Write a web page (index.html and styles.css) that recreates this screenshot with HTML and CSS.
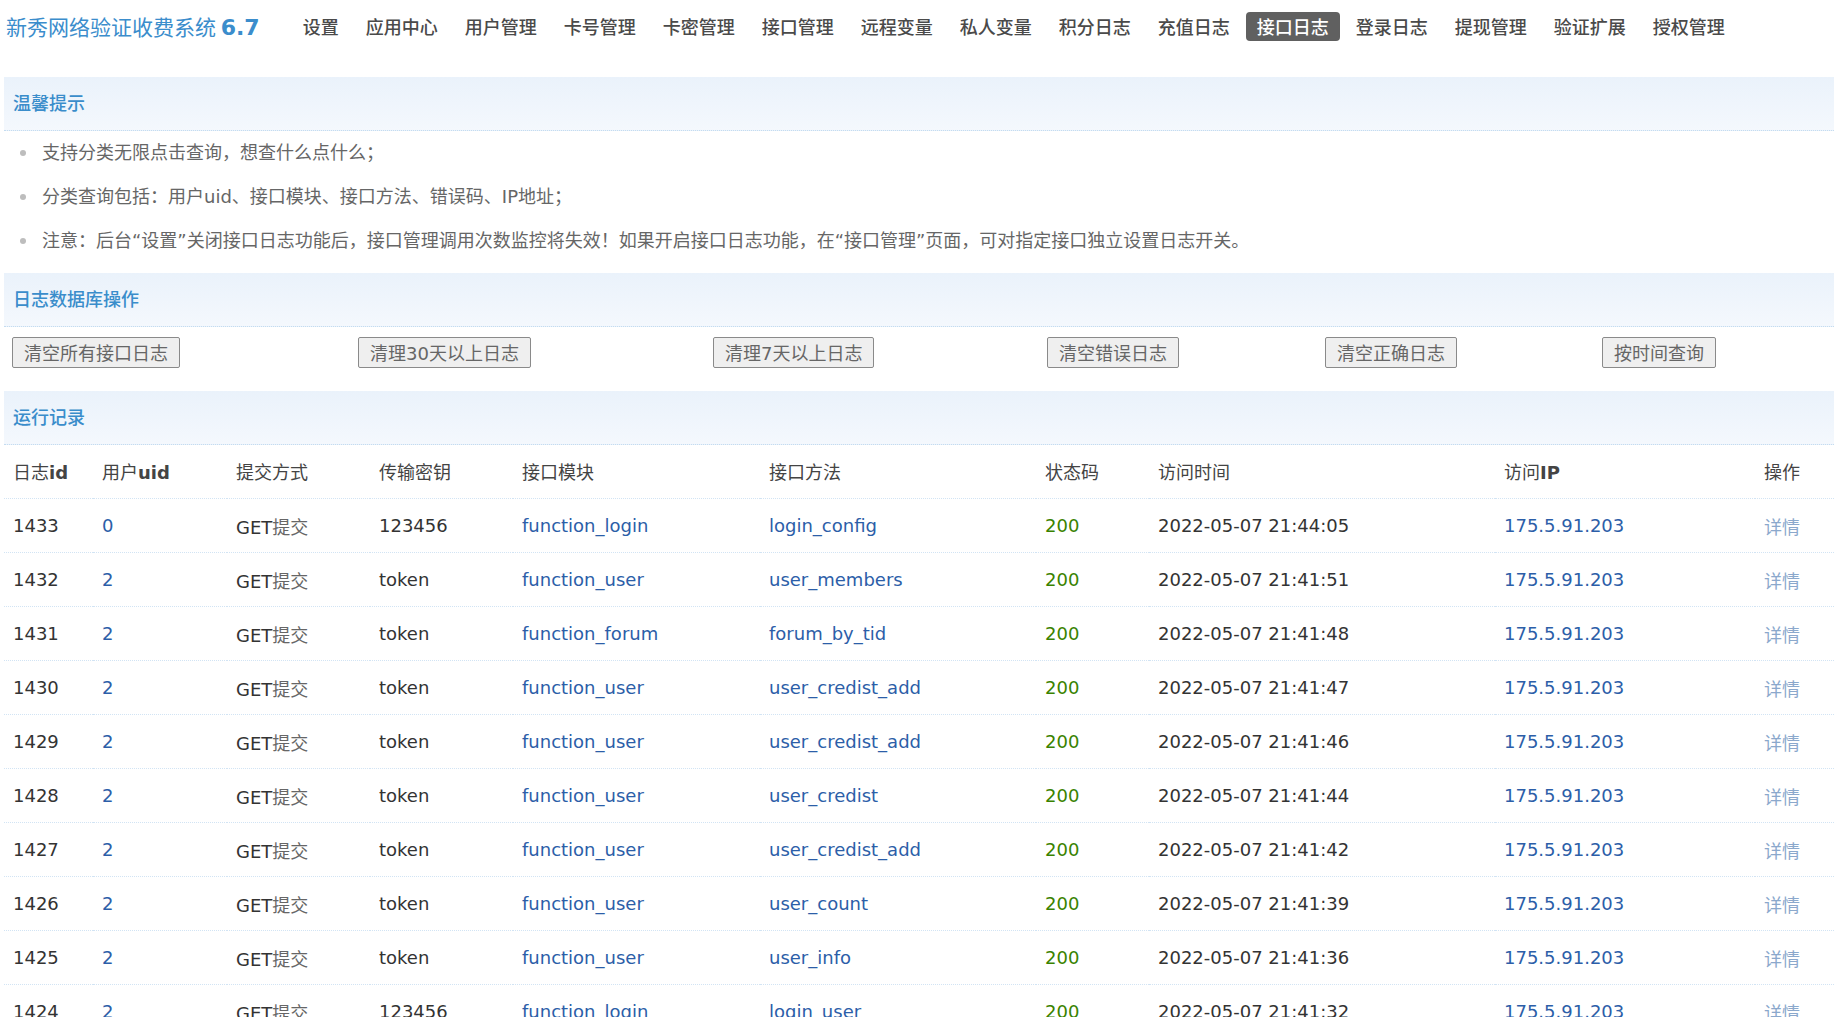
FILE: index.html
```html
<!DOCTYPE html>
<html lang="zh-CN">
<head>
    <meta charset="UTF-8">
    <title>接口日志 - 新秀网络验证收费系统</title>
    <link rel="stylesheet" href="styles.css">
</head>
<body>
    <div class="topbar">
        <div class="logo">新秀网络验证收费系统 <b>6.7</b></div>
        <ul class="nav">
            <li><a href="#">设置</a></li>
            <li><a href="#">应用中心</a></li>
            <li><a href="#">用户管理</a></li>
            <li><a href="#">卡号管理</a></li>
            <li><a href="#">卡密管理</a></li>
            <li><a href="#">接口管理</a></li>
            <li><a href="#">远程变量</a></li>
            <li><a href="#">私人变量</a></li>
            <li><a href="#">积分日志</a></li>
            <li><a href="#">充值日志</a></li>
            <li><a href="#" class="on">接口日志</a></li>
            <li><a href="#">登录日志</a></li>
            <li><a href="#">提现管理</a></li>
            <li><a href="#">验证扩展</a></li>
            <li><a href="#">授权管理</a></li>
        </ul>
    </div>

    <div class="main">
        <!-- 温馨提示 -->
        <div class="box-title">温馨提示</div>
        <ul class="tips">
            <li>支持分类无限点击查询，想查什么点什么；</li>
            <li>分类查询包括：用户uid、接口模块、接口方法、错误码、IP地址；</li>
            <li>注意：后台“设置”关闭接口日志功能后，接口管理调用次数监控将失效！如果开启接口日志功能，在“接口管理”页面，可对指定接口独立设置日志开关。</li>
        </ul>

        <!-- 日志数据库操作 -->
        <div class="box-title">日志数据库操作</div>
        <div class="ops">
            <div><button class="btn">清空所有接口日志</button></div>
            <div><button class="btn">清理30天以上日志</button></div>
            <div><button class="btn">清理7天以上日志</button></div>
            <div><button class="btn">清空错误日志</button></div>
            <div><button class="btn">清空正确日志</button></div>
            <div><button class="btn">按时间查询</button></div>
        </div>

        <!-- 运行记录 -->
        <div class="box-title">运行记录</div>
        <table class="log-table">
            <colgroup>
                <col style="width: 89px">
                <col style="width: 134px">
                <col style="width: 143px">
                <col style="width: 143px">
                <col style="width: 247px">
                <col style="width: 276px">
                <col style="width: 113px">
                <col style="width: 346px">
                <col style="width: 260px">
                <col>
            </colgroup>
            <thead>
                <tr>
                    <th>日志<b>id</b></th>
                    <th>用户<b>uid</b></th>
                    <th>提交方式</th>
                    <th>传输密钥</th>
                    <th>接口模块</th>
                    <th>接口方法</th>
                    <th>状态码</th>
                    <th>访问时间</th>
                    <th>访问<b>IP</b></th>
                    <th>操作</th>
                </tr>
            </thead>
            <tbody>
                <tr>
                    <td>1433</td><td><a href="#">0</a></td><td>GET<span class="cn">提交</span></td><td>123456</td>
                    <td><a href="#">function_login</a></td><td><a href="#">login_config</a></td>
                    <td class="ok">200</td><td>2022-05-07 21:44:05</td>
                    <td><a href="#">175.5.91.203</a></td><td><a href="#" class="more">详情</a></td>
                </tr>
                <tr>
                    <td>1432</td><td><a href="#">2</a></td><td>GET<span class="cn">提交</span></td><td>token</td>
                    <td><a href="#">function_user</a></td><td><a href="#">user_members</a></td>
                    <td class="ok">200</td><td>2022-05-07 21:41:51</td>
                    <td><a href="#">175.5.91.203</a></td><td><a href="#" class="more">详情</a></td>
                </tr>
                <tr>
                    <td>1431</td><td><a href="#">2</a></td><td>GET<span class="cn">提交</span></td><td>token</td>
                    <td><a href="#">function_forum</a></td><td><a href="#">forum_by_tid</a></td>
                    <td class="ok">200</td><td>2022-05-07 21:41:48</td>
                    <td><a href="#">175.5.91.203</a></td><td><a href="#" class="more">详情</a></td>
                </tr>
                <tr>
                    <td>1430</td><td><a href="#">2</a></td><td>GET<span class="cn">提交</span></td><td>token</td>
                    <td><a href="#">function_user</a></td><td><a href="#">user_credist_add</a></td>
                    <td class="ok">200</td><td>2022-05-07 21:41:47</td>
                    <td><a href="#">175.5.91.203</a></td><td><a href="#" class="more">详情</a></td>
                </tr>
                <tr>
                    <td>1429</td><td><a href="#">2</a></td><td>GET<span class="cn">提交</span></td><td>token</td>
                    <td><a href="#">function_user</a></td><td><a href="#">user_credist_add</a></td>
                    <td class="ok">200</td><td>2022-05-07 21:41:46</td>
                    <td><a href="#">175.5.91.203</a></td><td><a href="#" class="more">详情</a></td>
                </tr>
                <tr>
                    <td>1428</td><td><a href="#">2</a></td><td>GET<span class="cn">提交</span></td><td>token</td>
                    <td><a href="#">function_user</a></td><td><a href="#">user_credist</a></td>
                    <td class="ok">200</td><td>2022-05-07 21:41:44</td>
                    <td><a href="#">175.5.91.203</a></td><td><a href="#" class="more">详情</a></td>
                </tr>
                <tr>
                    <td>1427</td><td><a href="#">2</a></td><td>GET<span class="cn">提交</span></td><td>token</td>
                    <td><a href="#">function_user</a></td><td><a href="#">user_credist_add</a></td>
                    <td class="ok">200</td><td>2022-05-07 21:41:42</td>
                    <td><a href="#">175.5.91.203</a></td><td><a href="#" class="more">详情</a></td>
                </tr>
                <tr>
                    <td>1426</td><td><a href="#">2</a></td><td>GET<span class="cn">提交</span></td><td>token</td>
                    <td><a href="#">function_user</a></td><td><a href="#">user_count</a></td>
                    <td class="ok">200</td><td>2022-05-07 21:41:39</td>
                    <td><a href="#">175.5.91.203</a></td><td><a href="#" class="more">详情</a></td>
                </tr>
                <tr>
                    <td>1425</td><td><a href="#">2</a></td><td>GET<span class="cn">提交</span></td><td>token</td>
                    <td><a href="#">function_user</a></td><td><a href="#">user_info</a></td>
                    <td class="ok">200</td><td>2022-05-07 21:41:36</td>
                    <td><a href="#">175.5.91.203</a></td><td><a href="#" class="more">详情</a></td>
                </tr>
                <tr>
                    <td>1424</td><td><a href="#">2</a></td><td>GET<span class="cn">提交</span></td><td>123456</td>
                    <td><a href="#">function_login</a></td><td><a href="#">login_user</a></td>
                    <td class="ok">200</td><td>2022-05-07 21:41:32</td>
                    <td><a href="#">175.5.91.203</a></td><td><a href="#" class="more">详情</a></td>
                </tr>
            </tbody>
        </table>
    </div>
</body>
</html>
```

FILE: styles.css
```css
body {
    margin: 0;
    background: #fff;
    color: #444;
    font-family: "DejaVu Sans", "Noto Sans CJK SC", sans-serif;
    font-size: 18px;
}

a {
    text-decoration: none;
}

/* 顶部导航 */
.topbar {
    display: flex;
    align-items: center;
    height: 52px;
    padding-left: 6px;
    margin-bottom: 25px;
}

.logo {
    font-family: "Noto Sans CJK SC", sans-serif;
    font-size: 21px;
    color: #3b8dcc;
    margin-right: 32px;
    white-space: nowrap;
}

.logo b {
    font-family: "DejaVu Sans", sans-serif;
    font-weight: bold;
    font-size: 22px;
}

.nav {
    display: flex;
    list-style: none;
    margin: 0;
    padding: 0;
}

.nav li {
    margin-right: 5px;
}

.nav a {
    display: block;
    padding: 0 11px;
    height: 29px;
    line-height: 29px;
    border-radius: 4px;
    color: #4a4a4a;
    font-family: "Noto Sans CJK SC", sans-serif;
    font-size: 18px;
    font-weight: 500;
    white-space: nowrap;
}

.nav a.on {
    background: #606060;
    color: #fff;
}

/* 内容区 */
.main {
    padding-left: 4px;
}

.box-title {
    height: 51px;
    line-height: 51px;
    padding: 0 0 2px 9px;
    background: linear-gradient(#eaf2fb, #f4f8fd);
    border-bottom: 1px dotted #c4dcf0;
    color: #3a8dcb;
    font-family: "Noto Sans CJK SC", sans-serif;
    font-size: 18px;
    font-weight: 500;
}

.tips {
    list-style: none;
    margin: 0 0 10px;
    padding: 0;
}

.tips li {
    position: relative;
    height: 44px;
    line-height: 44px;
    padding-left: 38px;
    color: #666;
}

.tips li::before {
    content: "";
    position: absolute;
    left: 16px;
    top: 19px;
    width: 6px;
    height: 6px;
    border-radius: 50%;
    background: #bdbdbd;
}

.ops {
    display: grid;
    grid-template-columns: 346px 355px 334px 278px 277px 1fr;
    padding: 10px 0 23px 8px;
}

.btn {
    height: 31px;
    padding: 0 11px 1px;
    background: #efefef;
    border: 1px solid #8a8a8a;
    border-radius: 2px;
    color: #666;
    font-family: "DejaVu Sans", "Noto Sans CJK SC", sans-serif;
    font-size: 18px;
    cursor: pointer;
}

/* 日志表格 */
.log-table {
    width: 100%;
    table-layout: fixed;
    border-collapse: collapse;
}

.log-table th,
.log-table td {
    padding: 0 0 0 9px;
    text-align: left;
    white-space: nowrap;
    border-bottom: 1px dotted #d2e4f4;
}

.log-table th {
    height: 51px;
    padding-bottom: 2px;
    font-weight: normal;
    color: #444;
}

.log-table th b {
    font-weight: bold;
}

.log-table td {
    height: 53px;
    color: #333;
}

.log-table td .cn {
    color: #666;
}

.log-table td a {
    color: #2c5ea8;
}

.log-table td.ok {
    color: #3a8200;
}

.log-table td a.more {
    color: #8ba8cc;
}
```
